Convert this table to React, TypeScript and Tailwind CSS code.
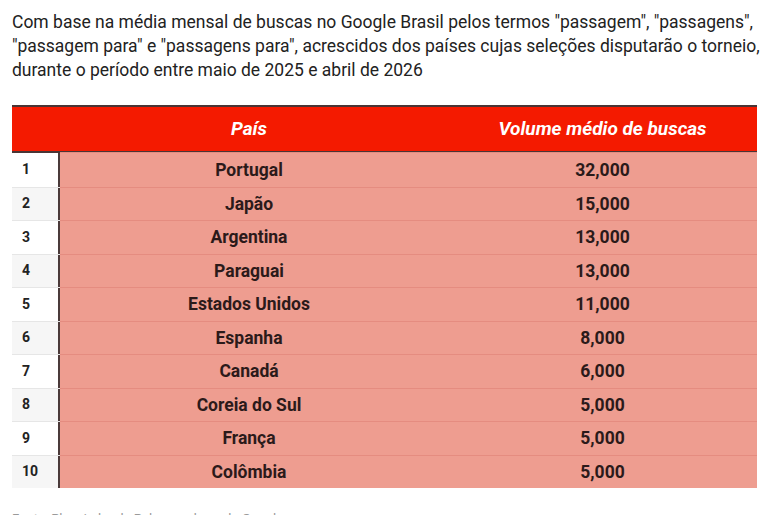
import React from "react";

const rows: [string, string][] = [
  ["Portugal", "32,000"],
  ["Japão", "15,000"],
  ["Argentina", "13,000"],
  ["Paraguai", "13,000"],
  ["Estados Unidos", "11,000"],
  ["Espanha", "8,000"],
  ["Canadá", "6,000"],
  ["Coreia do Sul", "5,000"],
  ["França", "5,000"],
  ["Colômbia", "5,000"],
];

export default function App() {
  return (
    <div
      className="w-[770px] h-[515px] overflow-hidden bg-white"
      style={{ fontFamily: "Roboto, 'Liberation Sans', sans-serif" }}
    >
      <div className="pl-[12px] pr-[8px] pt-[10px]">
        <p className="text-[17.5px] leading-[24px] text-[#222222]">
          Com base na média mensal de buscas no Google Brasil pelos termos "passagem", "passagens",
          "passagem para" e "passagens para", acrescidos dos países cujas seleções disputarão o torneio,
          durante o período entre maio de 2025 e abril de 2026
        </p>
      </div>
      <div className="mt-[23px] ml-[12px] w-[745px]">
        <div className="border-t-[2px] border-b-[2px] border-[#4a3535] bg-[#f41a00] h-[48px] grid grid-cols-[48px_378px_1fr] items-center">
          <div />
          <div className="text-center text-white font-bold italic text-[19px]">País</div>
          <div className="text-center text-white font-bold italic text-[19px] pl-[10px]">Volume médio de buscas</div>
        </div>
        {rows.map(([country, value], i) => (
          <div
            key={country}
            className={`grid grid-cols-[46px_2px_378px_1fr] h-[33.5px] ${i > 0 ? "border-t border-[#e6e6e6]" : ""}`}
          >
            <div
              className={`flex items-center pl-[10px] text-[14px] font-bold text-[#222222] ${i % 2 === 1 ? "bg-[#f6f6f6]" : "bg-white"}`}
            >
              {i + 1}
            </div>
            <div className="bg-[#4a3a3a]" />
            <div className="flex items-center justify-center bg-[#ee9d90] text-[17.5px] font-bold text-[#2b1a1a] border-t border-[#e58c80] -mt-px">
              {country}
            </div>
            <div className="flex items-center justify-center pl-[10px] bg-[#ee9d90] text-[17.5px] font-bold text-[#2b1a1a] border-t border-[#e58c80] -mt-px">
              {value}
            </div>
          </div>
        ))}
      </div>
      <div className="mt-[22px] ml-[12px] text-[13px] leading-[18px] text-[#9a9a9a]">
        Fonte: Planejador de Palavras-chave do Google
      </div>
    </div>
  );
}
